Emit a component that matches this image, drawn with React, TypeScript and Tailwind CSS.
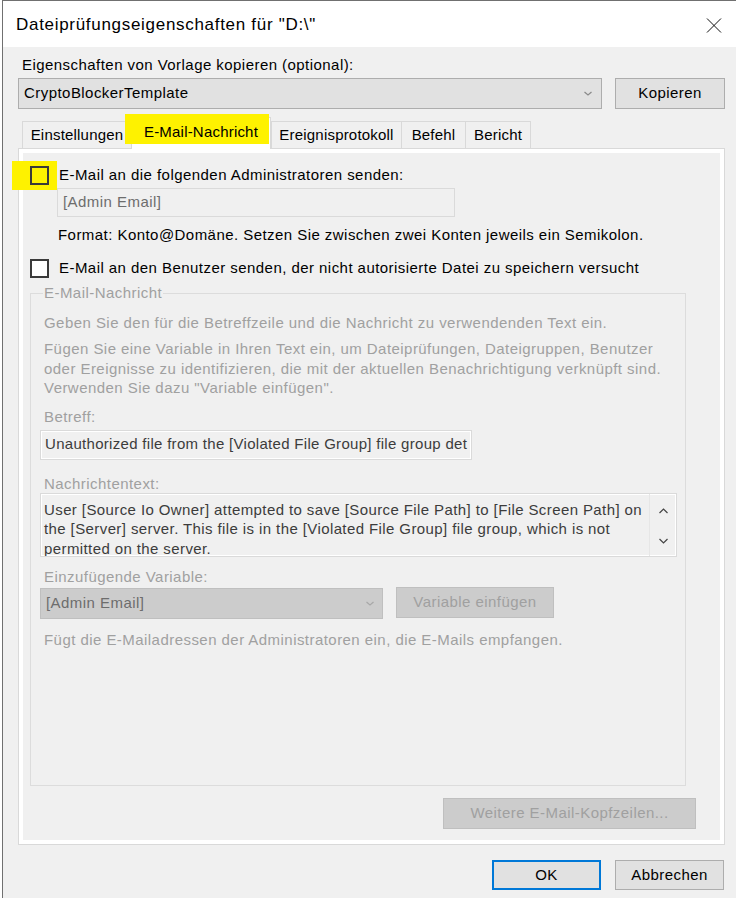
import React from "react";

const font = "font-['Liberation_Sans',Arial,sans-serif]";

function Chevron({ up = false, color = "#606060", w = 9, h = 6 }: { up?: boolean; color?: string; w?: number; h?: number }) {
  return (
    <svg width={w} height={h} viewBox={`0 0 ${w} ${h}`} className="block">
      <path
        d={up ? `M0.5 ${h - 1} L${w / 2} 1 L${w - 0.5} ${h - 1}` : `M0.5 1 L${w / 2} ${h - 1} L${w - 0.5} 1`}
        fill="none"
        stroke={color}
        strokeWidth="1.2"
      />
    </svg>
  );
}

function Tab({ label, w }: { label: string; w: string }) {
  return (
    <div
      className={`${w} h-[27px] flex items-center justify-center border-t border-l border-[#d9d9d9] bg-[#f0f0f0] text-[15px] text-black`}
    >
      {label}
    </div>
  );
}

export default function App() {
  return (
    <div className={`w-[736px] h-[898px] bg-white pl-[2px] overflow-hidden ${font}`}>
      <div className="h-full border-l border-t border-[#707070] flex flex-col">
        {/* Titelleiste */}
        <div className="h-[46px] bg-white flex items-center pl-[13px] pr-[14px] shrink-0">
          <span className="text-[17px] tracking-[0.7px] text-black leading-[20px] mt-[1px]">
            Dateiprüfungseigenschaften für "D:\"
          </span>
          <svg width="16" height="15" viewBox="0 0 16 15" className="ml-auto mt-[2px]">
            <path d="M1 0.5 L15 14.5 M15 0.5 L1 14.5" stroke="#111" strokeWidth="1" />
          </svg>
        </div>

        {/* Fensterinhalt */}
        <div className="flex-1 bg-[#f0f0f0] pl-[15px] pr-[11px] text-[15px] tracking-[0.45px] text-black">
          <div className="mt-[8px] pl-[4px] leading-[20px]">Eigenschaften von Vorlage kopieren (optional):</div>

          <div className="mt-[3px] flex gap-[13px]">
            <div className="w-[584px] h-[31px] bg-[#e1e1e1] border border-[#adadad] flex items-center pl-[5px] pr-[9px]">
              <span>CryptoBlockerTemplate</span>
              <span className="ml-auto">
                <Chevron color="#8a8a8a" w={8} h={5} />
              </span>
            </div>
            <div className="w-[110px] h-[31px] bg-[#e1e1e1] border border-[#adadad] flex items-center justify-center">
              Kopieren
            </div>
          </div>

          {/* Reiter */}
          <div className="h-[39px] flex items-end pl-[4px] relative z-10 tracking-[0.2px]">
            <Tab label="Einstellungen" w="w-[109px]" />
            <div className="w-[140px] h-[32px] -mb-[1px] relative bg-white border-t border-l border-r border-[#d9d9d9] flex items-center justify-center">
              <span className="absolute -left-[7px] -top-[4px] w-[144px] h-[30px] bg-[#fef200]" />
              <span className="relative -mt-[2px]">E-Mail-Nachricht</span>
            </div>
            <Tab label="Ereignisprotokoll" w="w-[130px]" />
            <Tab label="Befehl" w="w-[64px]" />
            <div className="w-[66px] h-[27px] flex items-center justify-center border-t border-l border-r border-[#d9d9d9] bg-[#f0f0f0]">
              Bericht
            </div>
          </div>

          {/* Registerseite */}
          <div className="h-[697px] border border-[#d9d9d9]">
            <div className="h-full border-4 border-white bg-[#f0f0f0] flex flex-col relative">
              <span className="absolute -left-[11px] top-[8px] w-[45px] h-[29px] bg-[#fef200] z-20" />

              <div className="mt-[12px] h-[20px] flex items-center pl-[7px] relative z-30">
                <span className="w-[19px] h-[19px] border-2 border-[#3a3a3a] shrink-0" />
                <span className="ml-[10px] leading-[20px]">E-Mail an die folgenden Administratoren senden:</span>
              </div>

              <div className="mt-[3px] ml-[34px] w-[398px] h-[29px] border border-[#dadada] flex items-center pl-[5px] text-[#6d6d6d]">
                [Admin Email]
              </div>

              <div className="mt-[8px] ml-[35px] leading-[20px]">
                Format: Konto@Domäne. Setzen Sie zwischen zwei Konten jeweils ein Semikolon.
              </div>

              <div className="mt-[13px] h-[20px] flex items-center pl-[7px]">
                <span className="w-[19px] h-[19px] border-2 border-[#3a3a3a] bg-white shrink-0" />
                <span className="ml-[10px] leading-[20px]">
                  E-Mail an den Benutzer senden, der nicht autorisierte Datei zu speichern versucht
                </span>
              </div>

              {/* Gruppe E-Mail-Nachricht */}
              <div className="mt-[15px] ml-[7px] w-[656px] h-[493px] border border-[#dcdcdc] relative flex flex-col text-[#a0a0a0]">
                <span className="absolute left-[12px] -top-[11px] px-[1px] bg-[#f0f0f0] leading-[20px]">
                  E-Mail-Nachricht
                </span>

                <div className="mt-[19px] ml-[13px] leading-[20px]">
                  Geben Sie den für die Betreffzeile und die Nachricht zu verwendenden Text ein.
                </div>
                <div className="mt-[6px] ml-[13px] leading-[19.5px]">
                  Fügen Sie eine Variable in Ihren Text ein, um Dateiprüfungen, Dateigruppen, Benutzer
                  <br />
                  oder Ereignisse zu identifizieren, die mit der aktuellen Benachrichtigung verknüpft sind.
                  <br />
                  Verwenden Sie dazu "Variable einfügen".
                </div>

                <div className="mt-[10px] ml-[13px] leading-[18px]">Betreff:</div>
                <div className="mt-[4px] ml-[9px] w-[432px] h-[30px] border border-[#dadada] shadow-[inset_0_0_0_1px_#fff] flex items-center pl-[4px] text-[#3c3c3c] tracking-[0.3px] overflow-hidden whitespace-nowrap">
                  Unauthorized file from the [Violated File Group] file group det
                </div>

                <div className="mt-[15px] ml-[13px] leading-[18px]">Nachrichtentext:</div>
                <div className="ml-[9px] w-[637px] h-[64px] border border-[#dadada] shadow-[inset_0_0_0_1px_#fff] flex overflow-hidden">
                  <div className="flex-1 pl-[3px] pt-[6px] leading-[19.5px] text-[#3c3c3c] tracking-[0.4px]">
                    User [Source Io Owner] attempted to save [Source File Path] to [File Screen Path] on
                    <br />
                    the [Server] server. This file is in the [Violated File Group] file group, which is not
                    <br />
                    permitted on the server.
                  </div>
                  <div className="w-[27px] border-l border-[#e6e6e6] flex flex-col items-center justify-between pt-[14px] pb-[12px]">
                    <Chevron up color="#444" />
                    <Chevron color="#444" />
                  </div>
                </div>

                <div className="mt-[11px] ml-[13px] leading-[18px]">Einzufügende Variable:</div>
                <div className="mt-[2px] ml-[9px] flex items-start gap-[13px]">
                  <div className="w-[343px] h-[31px] bg-[#cccccc] border border-[#bfbfbf] flex items-center pl-[5px] pr-[8px] text-[#6d6d6d]">
                    [Admin Email]
                    <span className="ml-auto">
                      <Chevron color="#a8a8a8" w={8} h={5} />
                    </span>
                  </div>
                  <div className="-mt-[1px] w-[158px] h-[31px] bg-[#cccccc] border border-[#bfbfbf] flex items-center justify-center text-[#a0a0a0]">
                    Variable einfügen
                  </div>
                </div>

                <div className="mt-[12px] ml-[13px] leading-[18px]">
                  Fügt die E-Mailadressen der Administratoren ein, die E-Mails empfangen.
                </div>
              </div>

              <div className="mt-[12px] self-end mr-[24px] w-[253px] h-[31px] bg-[#cccccc] border border-[#bfbfbf] flex items-center justify-center text-[#a0a0a0]">
                Weitere E-Mail-Kopfzeilen...
              </div>
            </div>
          </div>

          {/* Schaltflächen */}
          <div className="mt-[15px] flex justify-end gap-[14px] pr-[1px]">
            <div className="w-[109px] h-[30px] bg-[#e1e1e1] border-2 border-[#0078d7] flex items-center justify-center">
              OK
            </div>
            <div className="w-[109px] h-[30px] bg-[#e1e1e1] border border-[#adadad] flex items-center justify-center">
              Abbrechen
            </div>
          </div>
        </div>
      </div>
    </div>
  );
}
